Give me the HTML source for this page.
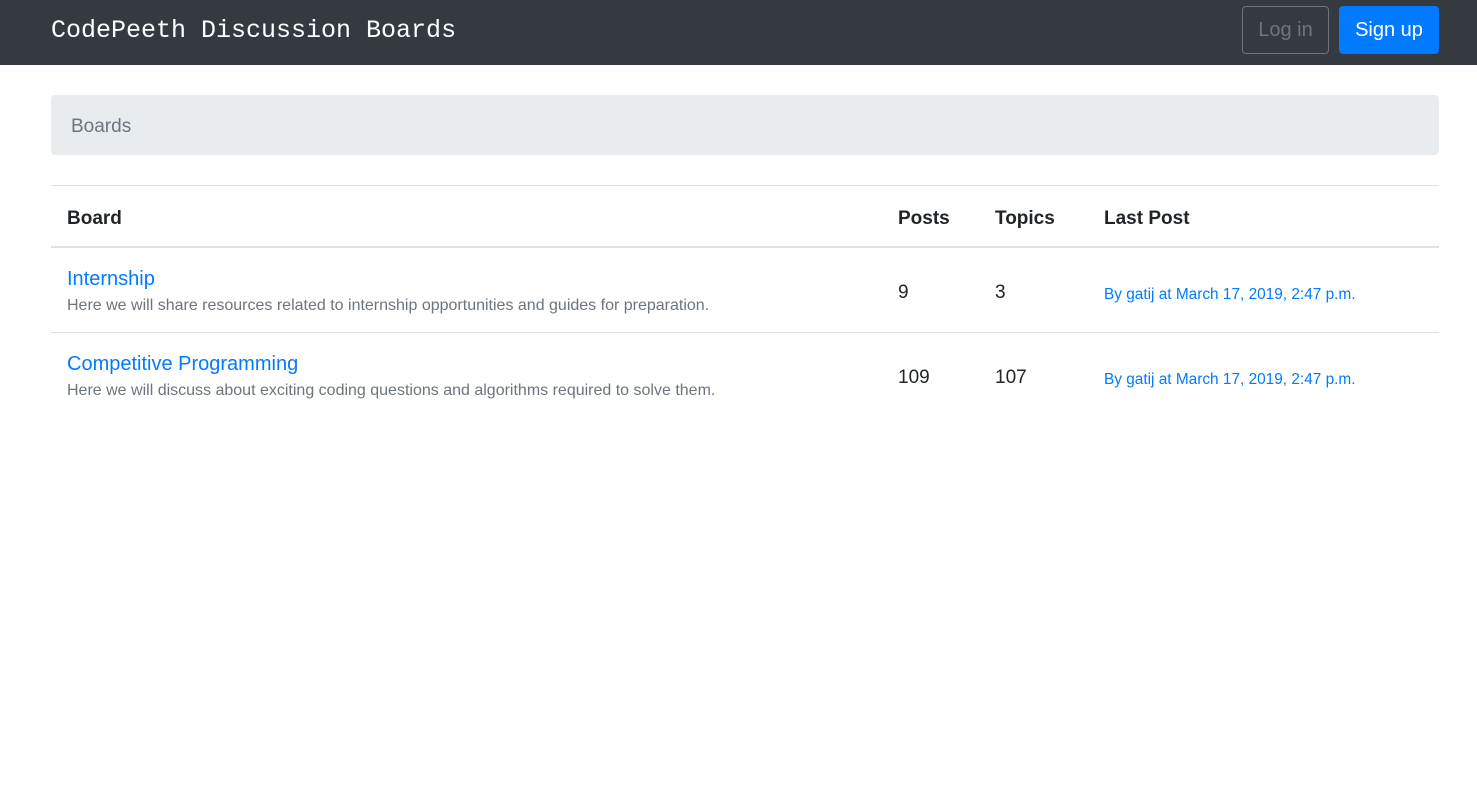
<!DOCTYPE html>
<html><head><meta charset="utf-8"><style>
body{margin:0;font-family:"Liberation Sans",sans-serif;color:#212529;background:#fff}
.nav{height:65px;background:#343a40;position:relative}
.brand{position:absolute;left:51px;top:16px;font-family:"Liberation Mono",monospace;font-size:25px;color:#fff}
.btn{position:absolute;top:6px;height:48px;border-radius:4px;font-size:20px;line-height:48px;text-align:center;box-sizing:border-box}
.login{left:1242px;width:87px;border:1px solid #6c757d;color:#6c757d;line-height:46px}
.signup{left:1339px;width:100px;background:#007bff;color:#fff}
.bc{position:absolute;left:51px;top:95px;width:1388px;height:60px;background:#e9ecef;border-radius:4px;font-size:19px;color:#6c757d;line-height:64px;padding-left:20px;box-sizing:border-box}
.tbl{position:absolute;left:51px;top:185px;width:1388px;border-top:1px solid #dee2e6}
.row{position:relative;border-bottom:1px solid #dee2e6}
.h{height:60px;border-bottom:2px solid #dee2e6;font-weight:bold;font-size:19px}
.h span{position:absolute;top:22px}
.r{height:84px}
.t{position:absolute;left:16px;top:20px;font-size:20px;color:#007bff}
.d{position:absolute;left:16px;top:49px;font-size:16px;color:#6c757d}
.n{position:absolute;top:34px;font-size:19px}
.lp{position:absolute;left:1053px;top:38px;font-size:15.4px;color:#007bff}
</style></head><body>
<div class="nav"><div class="brand">CodePeeth Discussion Boards</div>
<div class="btn login">Log in</div><div class="btn signup">Sign up</div></div>
<div class="bc">Boards</div>
<div class="tbl">
<div class="row h"><span style="left:16px">Board</span><span style="left:847px">Posts</span><span style="left:944px">Topics</span><span style="left:1053px">Last Post</span></div>
<div class="row r"><div class="t">Internship</div><div class="d">Here we will share resources related to internship opportunities and guides for preparation.</div><div class="n" style="left:847px">9</div><div class="n" style="left:944px">3</div><div class="lp">By gatij at March 17, 2019, 2:47 p.m.</div></div>
<div class="row r" style="border-bottom:none"><div class="t">Competitive Programming</div><div class="d">Here we will discuss about exciting coding questions and algorithms required to solve them.</div><div class="n" style="left:847px">109</div><div class="n" style="left:944px">107</div><div class="lp">By gatij at March 17, 2019, 2:47 p.m.</div></div>
</div>
</body></html>
